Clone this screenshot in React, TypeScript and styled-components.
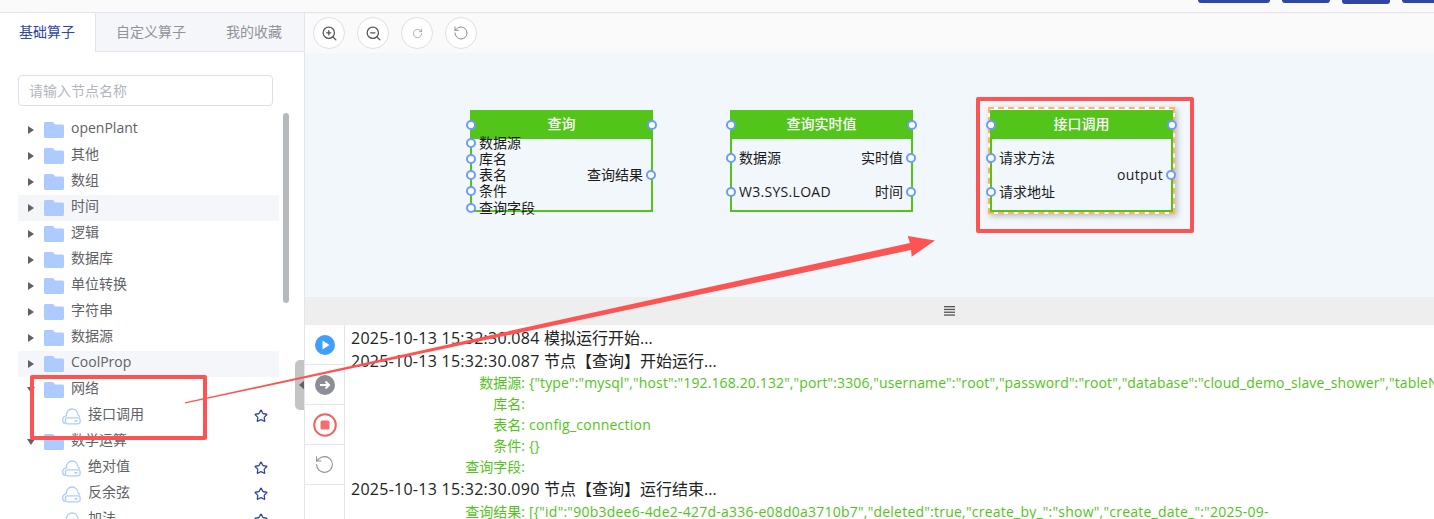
import styled, { createGlobalStyle } from "styled-components";
import { ZoomIn, ZoomOut, RotateCw, RotateCcw, Star } from "lucide-react";

const GlobalStyle = createGlobalStyle`
  html, body {
    margin: 0;
    padding: 0;
    overflow: hidden;
    background: #fff;
    font-family: "Open Sans", "Noto Sans CJK SC", sans-serif;
  }
  * {
    box-sizing: border-box;
  }
`;

const Page = styled.div`
  position: relative;
  width: 1434px;
  height: 519px;
  overflow: hidden;
  display: flex;
  flex-direction: column;
`;

const TopBar = styled.div`
  height: 13px;
  flex: none;
  overflow: hidden;
  display: flex;
  justify-content: flex-end;
  gap: 12px;
  margin-right: -16px;
  background: #fafafa;
  border-bottom: 1px solid #e3e3e8;
`;

const TopButton = styled.div<{ $w: number; $h?: number }>`
  width: ${(p) => p.$w}px;
  height: ${(p) => p.$h ?? 3}px;
  background: #2f46a3;
  border-radius: 0 0 3px 3px;
`;

const Main = styled.div`
  flex: 1;
  min-height: 0;
  display: flex;
`;

const Sidebar = styled.aside`
  width: 305px;
  flex: none;
  border-right: 1px solid #e3e4ee;
  display: flex;
  flex-direction: column;
  overflow: hidden;
  position: relative;
`;

const Tabs = styled.div`
  height: 39px;
  flex: none;
  display: flex;
  background: #f5f6fa;
  border-bottom: 1px solid #e3e4ee;
`;

const Tab = styled.div<{ $active?: boolean }>`
  padding: 0 20px 0 ${(p) => (p.$active ? 19 : 20)}px;
  width: ${(p) => (p.$active ? "96px" : "auto")};
  height: ${(p) => (p.$active ? "39px" : "38px")};
  line-height: 38px;
  font-size: 14px;
  white-space: nowrap;
  color: ${(p) => (p.$active ? "#2f46a3" : "#909399")};
  background: ${(p) => (p.$active ? "#fff" : "transparent")};
  border-right: ${(p) => (p.$active ? "1px solid #e3e4ee" : "none")};
`;

const SearchWrap = styled.div`
  padding: 23px 0 0 18px;
  height: 65px;
  flex: none;
`;

const SearchInput = styled.input`
  display: block;
  width: 255px;
  height: 31px;
  padding: 0 10px;
  border: 1px solid #dcdfe6;
  border-radius: 4px;
  outline: none;
  font-size: 14px;
  font-family: inherit;
  color: #606266;
  &::placeholder {
    color: #b4b6bd;
  }
`;

const Tree = styled.div`
  width: 279px;
  padding-left: 18px;
`;

const Row = styled.div<{ $hover?: boolean; $child?: boolean }>`
  position: relative;
  height: 26px;
  display: flex;
  align-items: center;
  padding-left: ${(p) => (p.$child ? 44 : 10)}px;
  font-size: 14px;
  color: #606266;
  background: ${(p) => (p.$hover ? "#f5f6fa" : "transparent")};
`;

const Caret = styled.span<{ $open?: boolean }>`
  width: 0;
  height: 0;
  flex: none;
  margin-right: 10px;
  margin-left: ${(p) => (p.$open ? -1 : 0)}px;
  ${(p) =>
    p.$open
      ? `border-left: 4px solid transparent; border-right: 4px solid transparent; border-top: 6px solid #606266; margin-right: 9px;`
      : `border-top: 4.5px solid transparent; border-bottom: 4.5px solid transparent; border-left: 6px solid #606266;`}
`;

const RowLabel = styled.span`
  margin-left: 7px;
  line-height: 18px;
  position: relative;
  top: -2px;
`;

const StarSlot = styled.span`
  position: absolute;
  left: 236px;
  top: 6px;
  display: flex;
  color: #2f46a3;
`;

const ScrollThumb = styled.div`
  position: absolute;
  left: 283px;
  top: 100px;
  width: 6px;
  height: 190px;
  border-radius: 3px;
  background: #b6babd;
`;

const CollapseHandle = styled.div`
  position: absolute;
  left: 295px;
  top: 347px;
  width: 10px;
  height: 50px;
  background: #c4c4c4;
  border-radius: 5px 0 0 5px;
  display: flex;
  align-items: center;
  justify-content: flex-end;
  &::after {
    content: "";
    border-top: 5px solid transparent;
    border-bottom: 5px solid transparent;
    border-right: 6px solid #606266;
  }
`;

const Work = styled.div`
  flex: 1;
  min-width: 0;
  display: flex;
  flex-direction: column;
`;

const Toolbar = styled.div`
  height: 40px;
  flex: none;
  display: flex;
  align-items: center;
  gap: 12px;
  padding-left: 8px;
  background: #fafafa;
`;

const RoundButton = styled.div<{ $dim?: boolean }>`
  width: 32px;
  height: 32px;
  border-radius: 50%;
  background: #fff;
  border: 1px solid #dcdfe6;
  display: flex;
  align-items: center;
  justify-content: center;
  color: ${(p) => (p.$dim ? "#8c8c8c" : "#555")};
`;

const Canvas = styled.div`
  position: relative;
  isolation: isolate;
  height: 244px;
  flex: none;
  background: #f2f7fb;
`;

const NodeBox = styled.div<{ $x: number }>`
  position: absolute;
  left: ${(p) => p.$x - 305}px;
  top: 57px;
  width: 183px;
  height: 102px;
  border: 2px solid #52c41a;
  border-top: none;
  color: #1a1a1a;
  font-size: 14px;
`;

const NodeHeader = styled.div`
  position: relative;
  height: 29px;
  margin: 0 -2px;
  background: #52c41a;
  color: #fff;
  text-align: center;
  line-height: 28px;
  font-size: 14px;
  font-weight: 500;
`;

const NodeBody = styled.div`
  display: flex;
  justify-content: space-between;
`;

const PinColumn = styled.div<{ $top: number }>`
  margin-top: ${(p) => p.$top}px;
`;

const Pin = styled.div<{ $h: number; $side: "in" | "out"; $latin: boolean }>`
  position: relative;
  height: ${(p) => p.$h}px;
  line-height: ${(p) => p.$h}px;
  white-space: nowrap;
  letter-spacing: ${(p) => (p.$latin ? "0.3px" : "0")};
  ${(p) => (p.$side === "in" ? "padding-left: 7px;" : "padding-right: 8px; text-align: right;")}
`;

const PortDot = styled.span<{ $side: "in" | "out" }>`
  position: absolute;
  top: 50%;
  ${(p) => (p.$side === "in" ? "left: -6px;" : "right: -5px;")}
  width: 10px;
  height: 10px;
  margin-top: -5px;
  border-radius: 50%;
  background: #fff;
  border: 2px solid #6c9bff;
  z-index: 2;
`;

const HeaderPort = styled(PortDot)`
  ${(p) => (p.$side === "in" ? "left: -4px;" : "right: -4px;")}
  top: 15px;
`;

const Selection = styled.div`
  position: absolute;
  left: -4px;
  right: -4px;
  top: -3px;
  bottom: -4px;
  z-index: -1;
  background: #fff;
  border: 2px dashed #ffb35c;
  box-shadow: 2px 2px 6px rgba(0, 0, 0, 0.25);
`;

const SelectionInner = styled.div`
  position: absolute;
  inset: 1px;
  background: #f2f7fb;
`;

const Splitter = styled.div`
  height: 28px;
  flex: none;
  background: #eeeeee;
  display: flex;
  align-items: center;
  padding-left: 639px;
`;

const LogPanel = styled.div`
  flex: 1;
  min-height: 0;
  display: flex;
  overflow: hidden;
`;

const LogControls = styled.div`
  width: 40px;
  flex: none;
  border-right: 1px solid #e3e4ee;
  background: #fff;
`;

const ControlCell = styled.div`
  height: 40px;
  display: flex;
  align-items: center;
  justify-content: center;
  border-bottom: 1px solid #e3e4ee;
`;

const LogBody = styled.div`
  flex: 1;
  min-width: 0;
  padding: 1.5px 0 0 6px;
  overflow: hidden;
  white-space: nowrap;
`;

const LogLine = styled.div`
  height: 23px;
  line-height: 23px;
  font-size: 16px;
  color: #222;
`;

const Stamp = styled.span`
  letter-spacing: 0.26px;
`;

const DataLine = styled.div<{ $gap?: number }>`
  display: flex;
  height: 21.2px;
  line-height: 19.2px;
  margin-top: ${(p) => p.$gap ?? 0}px;
  font-size: 14px;
  color: #52c41a;
`;

const DataKey = styled.span`
  width: 174px;
  flex: none;
  text-align: right;
  margin-right: 4px;
`;

const DataValue = styled.span<{ $tight?: boolean }>`
  letter-spacing: ${(p) => (p.$tight ? "0.13px" : "0.23px")};
`;

const MarkBox = styled.div<{ $x: number; $y: number; $w: number; $h: number }>`
  position: absolute;
  left: ${(p) => p.$x}px;
  top: ${(p) => p.$y}px;
  width: ${(p) => p.$w}px;
  height: ${(p) => p.$h}px;
  border: 4px solid #fd5353;
  border-radius: 2px;
  pointer-events: none;
  z-index: 5;
`;

const ArrowLayer = styled.svg`
  position: absolute;
  left: 0;
  top: 0;
  z-index: 6;
  pointer-events: none;
`;

const FolderIcon = () => (
  <svg width="20" height="16" viewBox="0 0 20 16">
    <path d="M0 1.500C0 .7.7 0 1.500 0H9l2 2.500h7.500c.8 0 1.500.7 1.500 1.500v10.500c0 .8-.7 1.500-1.500 1.500h-17C.7 16 0 15.300 0 14.500z" fill="#adcbff" />
  </svg>
);

const CloudIcon = () => (
  <svg width="19" height="17" viewBox="0 0 19 17" fill="none" stroke="#adcbff" strokeWidth="1.300">
    <path d="M3.200 15.700C1.500 15 .7 13.500.7 11.900c0-2.100 1.500-3.700 3.500-4C4.500 4 6.800 1 10 1c3.200 0 5.700 2.500 6.100 6 .8.400 1.400 1.200 1.700 2.100" />
    <rect x="3.500" y="9.800" width="14.600" height="6" rx="1.800" fill="#fff" />
    <rect x="12.500" y="12" width="3" height="1.600" fill="#adcbff" stroke="none" />
  </svg>
);

type TreeItem = { name: string; open?: boolean; hover?: boolean; child?: boolean };

const treeItems: TreeItem[] = [
  { name: "openPlant" },
  { name: "其他" },
  { name: "数组" },
  { name: "时间", hover: true },
  { name: "逻辑" },
  { name: "数据库" },
  { name: "单位转换" },
  { name: "字符串" },
  { name: "数据源" },
  { name: "CoolProp", hover: true },
  { name: "网络", open: true },
  { name: "接口调用", child: true },
  { name: "数学运算", open: true },
  { name: "绝对值", child: true },
  { name: "反余弦", child: true },
  { name: "加法", child: true },
];

const isLatin = (text: string) => /^[\x20-\x7e]+$/.test(text);

type FlowNodeProps = {
  x: number;
  title: string;
  inputs: string[];
  outputs: string[];
  inputH: number;
  inputTop: number;
  outputH: number;
  selected?: boolean;
};

function FlowNode({ x, title, inputs, outputs, inputH, inputTop, outputH, selected }: FlowNodeProps) {
  return (
    <NodeBox $x={x}>
      {selected && (
        <Selection>
          <SelectionInner />
        </Selection>
      )}
      <NodeHeader>
        {title}
        <HeaderPort $side="in" />
        <HeaderPort $side="out" />
      </NodeHeader>
      <NodeBody>
        <PinColumn $top={inputTop}>
          {inputs.map((label) => (
            <Pin key={label} $h={inputH} $side="in" $latin={isLatin(label)}>
              <PortDot $side="in" />
              {label}
            </Pin>
          ))}
        </PinColumn>
        <PinColumn $top={1.5}>
          {outputs.map((label) => (
            <Pin key={label} $h={outputH} $side="out" $latin={isLatin(label)}>
              <PortDot $side="out" />
              {label}
            </Pin>
          ))}
        </PinColumn>
      </NodeBody>
    </NodeBox>
  );
}

export default function App() {
  return (
    <Page>
      <GlobalStyle />
      <TopBar>
        <TopButton $w={72} />
        <TopButton $w={48} />
        <TopButton $w={48} $h={4} />
        <TopButton $w={48} />
      </TopBar>
      <Main>
        <Sidebar>
          <Tabs>
            <Tab $active>基础算子</Tab>
            <Tab>自定义算子</Tab>
            <Tab>我的收藏</Tab>
          </Tabs>
          <SearchWrap>
            <SearchInput placeholder="请输入节点名称" />
          </SearchWrap>
          <Tree>
            {treeItems.map((item) =>
              item.child ? (
                <Row key={item.name} $child>
                  <CloudIcon />
                  <RowLabel>{item.name}</RowLabel>
                  <StarSlot>
                    <Star size={14} strokeWidth={2.2} />
                  </StarSlot>
                </Row>
              ) : (
                <Row key={item.name} $hover={item.hover}>
                  <Caret $open={item.open} />
                  <FolderIcon />
                  <RowLabel>{item.name}</RowLabel>
                </Row>
              )
            )}
          </Tree>
          <ScrollThumb />
          <CollapseHandle />
        </Sidebar>
        <Work>
          <Toolbar>
            <RoundButton>
              <ZoomIn size={17} strokeWidth={1.8} />
            </RoundButton>
            <RoundButton>
              <ZoomOut size={17} strokeWidth={1.8} />
            </RoundButton>
            <RoundButton $dim>
              <RotateCw size={11} strokeWidth={1.5} />
            </RoundButton>
            <RoundButton $dim>
              <RotateCcw size={16} strokeWidth={1.5} />
            </RoundButton>
          </Toolbar>
          <Canvas>
            <FlowNode
              x={470}
              title="查询"
              inputs={["数据源", "库名", "表名", "条件", "查询字段"]}
              outputs={["查询结果"]}
              inputH={16.25}
              inputTop={-4.5}
              outputH={68}
            />
            <FlowNode
              x={730}
              title="查询实时值"
              inputs={["数据源", "W3.SYS.LOAD"]}
              outputs={["实时值", "时间"]}
              inputH={34}
              inputTop={1.5}
              outputH={34}
            />
            <FlowNode
              x={990}
              title="接口调用"
              inputs={["请求方法", "请求地址"]}
              outputs={["output"]}
              inputH={34}
              inputTop={1.5}
              outputH={68}
              selected
            />
          </Canvas>
          <Splitter>
            <svg width="11" height="10" viewBox="0 0 11 10" fill="#555">
              <rect y="0" width="11" height="1.300" />
              <rect y="2.800" width="11" height="1.300" />
              <rect y="5.600" width="11" height="1.300" />
              <rect y="8.400" width="11" height="1.300" />
            </svg>
          </Splitter>
          <LogPanel>
            <LogControls>
              <ControlCell>
                <svg width="20" height="20" viewBox="0 0 20 20">
                  <circle cx="10" cy="10" r="10" fill="#409eff" />
                  <path d="M7.500 5.500v9l7-4.500z" fill="#fff" />
                </svg>
              </ControlCell>
              <ControlCell>
                <svg width="20" height="20" viewBox="0 0 20 20">
                  <circle cx="10" cy="10" r="10" fill="#8c8d96" />
                  <path d="M5 10h9M10.500 6.500 14 10l-3.500 3.500" fill="none" stroke="#fff" strokeWidth="2" />
                </svg>
              </ControlCell>
              <ControlCell>
                <svg width="24" height="24" viewBox="0 0 24 24">
                  <circle cx="12" cy="12" r="10.800" fill="none" stroke="#f56060" strokeWidth="2" />
                  <rect x="7.500" y="7.500" width="9" height="9" rx="1.500" fill="#f56c6c" />
                </svg>
              </ControlCell>
              <ControlCell>
                <RotateCcw size={21} strokeWidth={1.2} color="#8c8d96" />
              </ControlCell>
            </LogControls>
            <LogBody>
              <LogLine>
                <Stamp>2025-10-13 15:32:30.084 </Stamp>模拟运行开始...
              </LogLine>
              <LogLine>
                <Stamp>2025-10-13 15:32:30.087 </Stamp>节点【查询】开始运行...
              </LogLine>
              <DataLine>
                <DataKey>数据源:</DataKey>
                <DataValue $tight>
                  {'{"type":"mysql","host":"192.168.20.132","port":3306,"username":"root","password":"root","database":"cloud_demo_slave_shower","tableName":"config_connection"}'}
                </DataValue>
              </DataLine>
              <DataLine>
                <DataKey>库名:</DataKey>
              </DataLine>
              <DataLine>
                <DataKey>表名:</DataKey>
                <DataValue>config_connection</DataValue>
              </DataLine>
              <DataLine>
                <DataKey>条件:</DataKey>
                <DataValue>{"{}"}</DataValue>
              </DataLine>
              <DataLine>
                <DataKey>查询字段:</DataKey>
              </DataLine>
              <LogLine>
                <Stamp>2025-10-13 15:32:30.090 </Stamp>节点【查询】运行结束...
              </LogLine>
              <DataLine $gap={1}>
                <DataKey>查询结果:</DataKey>
                <DataValue>
                  {'[{"id":"90b3dee6-4de2-427d-a336-e08d0a3710b7","deleted":true,"create_by_":"show","create_date_":"2025-09-'}
                </DataValue>
              </DataLine>
            </LogBody>
          </LogPanel>
        </Work>
      </Main>
      <MarkBox $x={30} $y={375} $w={177} $h={65} />
      <MarkBox $x={976} $y={97} $w={218} $h={136} />
      <ArrowLayer width="1434" height="519" viewBox="0 0 1434 519">
        <path d="M185 402.300 910 243 907.700 236 935 240.600 911.700 256.700 911 250 185 403.500z" fill="#fd5353" />
      </ArrowLayer>
    </Page>
  );
}
